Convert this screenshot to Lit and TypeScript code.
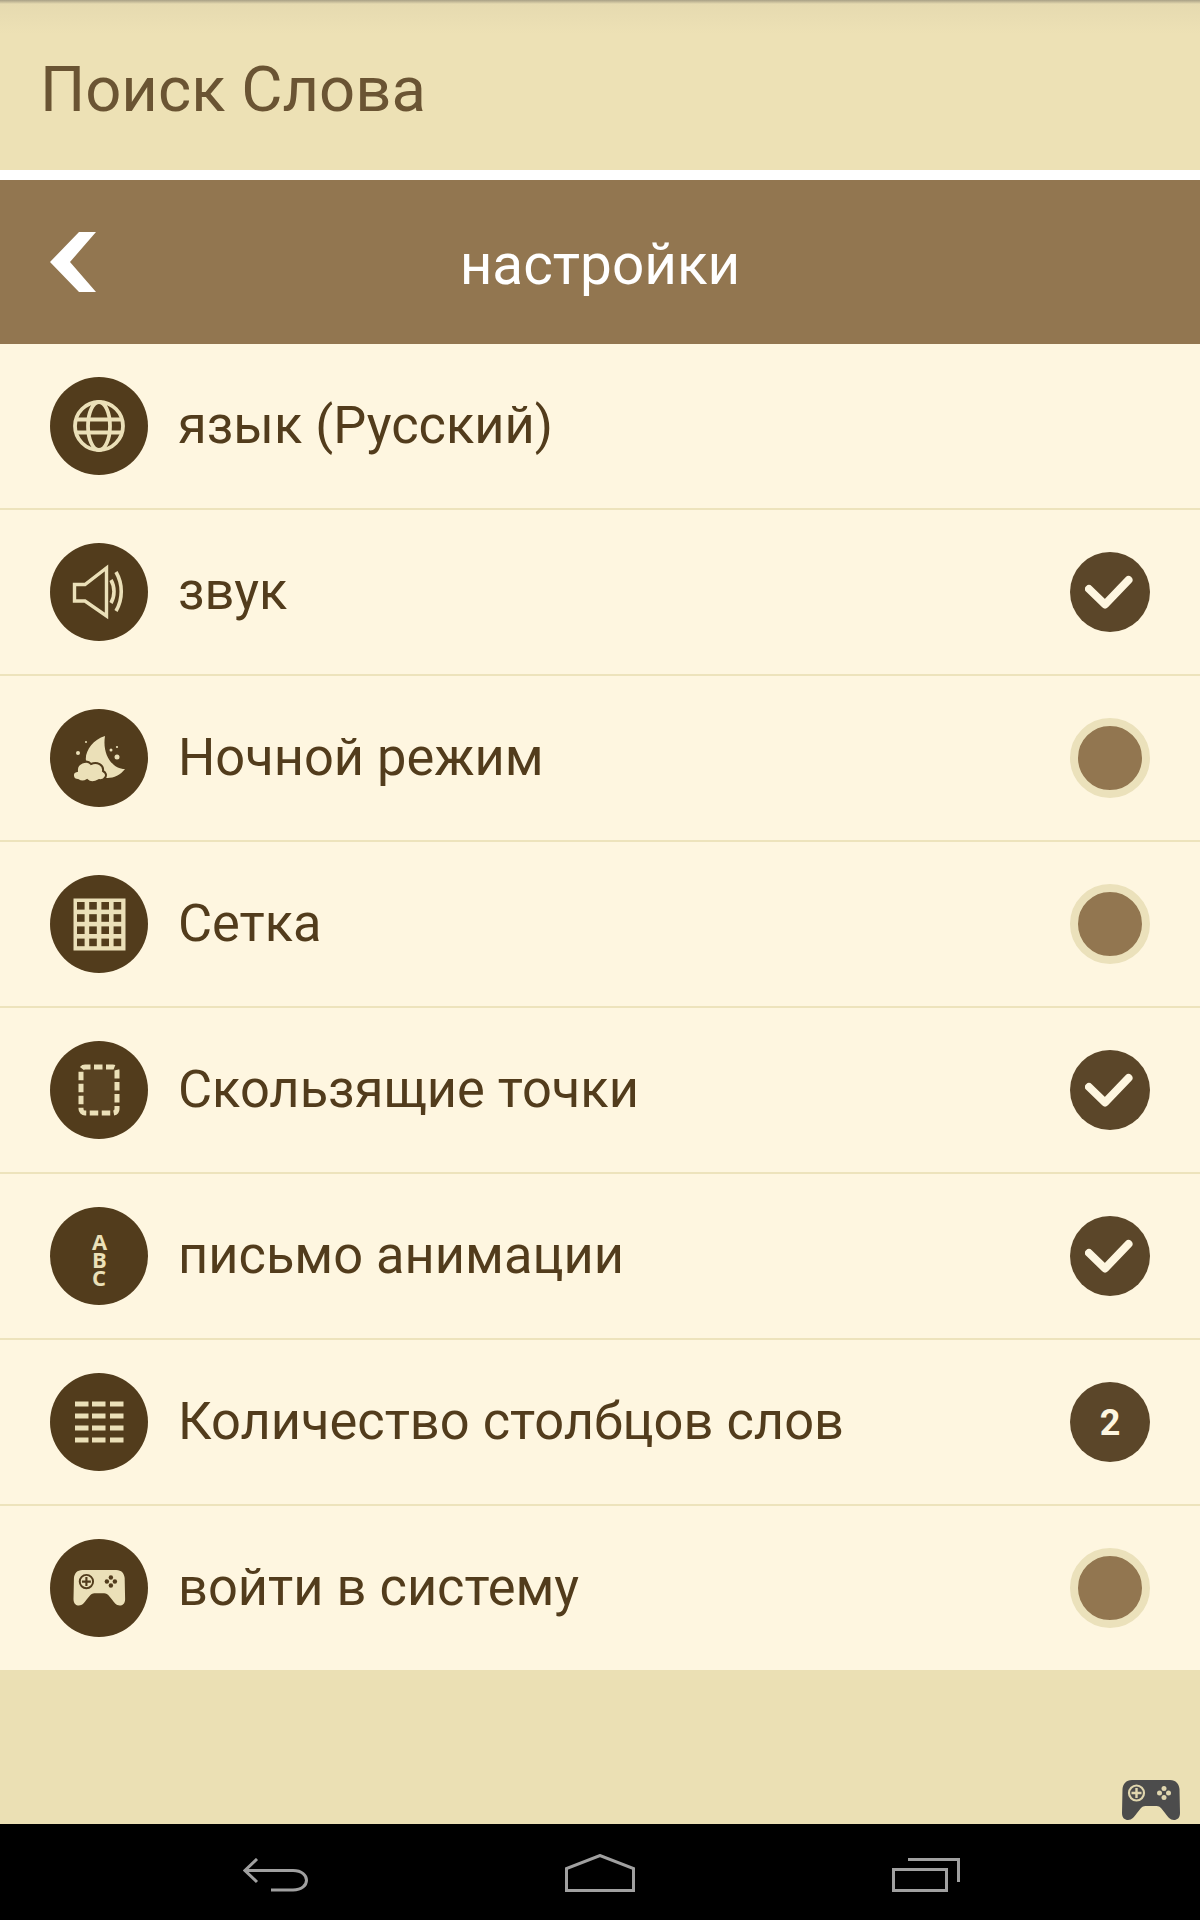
import { LitElement, html, css, svg } from "lit";
import { customElement } from "lit/decorators.js";

const CREAM = "#ebe0b8";
const DARK = "#523c1c";

const padPath =
  "M10 0H48C54 0 57 4 57.500 9L58 33C58 38 55 40 52 40C48 40 46 37 43 33L39 28C37 26 35 26 33 26H25C23 26 21 26 19 28L15 33C12 37 10 40 6 40C3 40 0 38 0 33L.5 9C1 4 4 0 10 0Z";

const pad = (body: string, detail: string) => svg`
  <path d=${padPath} fill=${body}></path>
  <circle cx="14.500" cy="13" r="7.500" fill="none" stroke=${detail} stroke-width="2.200"></circle>
  <path d="M14.500 8v10M9.500 13h10" stroke=${detail} stroke-width="2.400"></path>
  <circle cx="42" cy="8.500" r="2.500" fill=${detail}></circle>
  <circle cx="42" cy="17.500" r="2.500" fill=${detail}></circle>
  <circle cx="37.500" cy="13" r="2.500" fill=${detail}></circle>
  <circle cx="46.500" cy="13" r="2.500" fill=${detail}></circle>`;

const grid = () => {
  const cells = [];
  for (let r = 0; r < 4; r++)
    for (let c = 0; c < 4; c++)
      cells.push(svg`<rect x=${27 + c * 12.2} y=${27 + r * 12.2} width="7.600" height="7.600" fill=${DARK}></rect>`);
  return cells;
};

const bars = () => {
  const out = [];
  for (const y of [28.500, 40.500, 52.500, 64.500])
    for (const x of [25, 42, 60])
      out.push(svg`<rect x=${x} y=${y} width="13.500" height="5" fill=${CREAM}></rect>`);
  return out;
};

const icons: Record<string, unknown> = {
  globe: svg`<g fill="none" stroke=${CREAM} stroke-width="3.800">
    <circle cx="49" cy="49" r="24"></circle>
    <ellipse cx="49" cy="49" rx="11" ry="24"></ellipse>
    <path d="M25 42.500H73M25 55.500H73"></path></g>`,
  sound: svg`<g fill="none" stroke=${CREAM}>
    <path d="M24.500 41.500H35L56.500 25V73L35 58H24.500Z" stroke-width="3.400"></path>
    <path d="M61 37C65 44 65 53 61 60" stroke-width="3.600"></path>
    <path d="M66 29C73 41 73 56 66 68" stroke-width="3.600"></path></g>`,
  night: svg`<path d="M55 27C39 32 30 50 40 60C49 72 66 72 75 60C62 60 52 45 55 27Z" fill=${CREAM}></path>
    <path d="M28 71C22 71 21 63 27 62C26 54 37 50 41 55C47 52 54 56 53 62C59 65 55 72 49 71C44 74 40 74 37 71C34 73 31 73 28 71Z" fill=${CREAM} stroke=${DARK} stroke-width="2"></path>
    <circle cx="28" cy="44" r="2" fill=${CREAM}></circle>
    <circle cx="67" cy="48" r="2.500" fill=${CREAM}></circle>
    <circle cx="61" cy="41" r="1.500" fill=${CREAM}></circle>
    <circle cx="67" cy="38" r="1.100" fill=${CREAM}></circle>
    <circle cx="36" cy="33" r="1" fill=${CREAM}></circle>`,
  grid: svg`<rect x="23.500" y="23.500" width="52" height="52" fill=${CREAM}></rect>${grid()}`,
  dashed: svg`<rect x="31" y="26" width="36" height="46" rx="4" fill="#584222" stroke=${CREAM} stroke-width="5" stroke-dasharray="8.500 3.500" stroke-dashoffset="3"></rect>`,
  abc: svg`<text class="abc" x="49" y="19" fill=${CREAM}>ABC</text>`,
  columns: bars(),
  pad: svg`<g transform="translate(23.500 31) scale(.89)">${pad(CREAM, DARK)}</g>`,
};

const rows: { icon: string; label: string; end: "none" | "on" | "off" | "num" }[] = [
  { icon: "globe", label: "язык (Русский)", end: "none" },
  { icon: "sound", label: "звук", end: "on" },
  { icon: "night", label: "Ночной режим", end: "off" },
  { icon: "grid", label: "Сетка", end: "off" },
  { icon: "dashed", label: "Скользящие точки", end: "on" },
  { icon: "abc", label: "письмо анимации", end: "on" },
  { icon: "columns", label: "Количество столбцов слов", end: "num" },
  { icon: "pad", label: "войти в систему", end: "off" },
];

@customElement("app-root")
export class AppRoot extends LitElement {
  static styles = css`
    :host {
      display: block;
      font-family: Roboto, "Noto Sans", sans-serif;
    }
    .screen {
      display: flex;
      flex-direction: column;
      height: 1920px;
      background: #fff;
    }
    .top {
      flex: none;
      height: 170px;
      display: flex;
      align-items: center;
      padding: 7px 0 0 40px;
      box-sizing: border-box;
      background: linear-gradient(#a89f85 0, #e6dab0 4px, #ede1b5 34px);
      color: #6a5433;
      font-size: 63.400px;
    }
    .head {
      flex: none;
      height: 164px;
      margin-top: 10px;
      background: #927650;
      color: #fff;
      display: grid;
      grid-template-columns: 1fr auto 1fr;
      align-items: center;
      font-size: 56.700px;
    }
    .title {
      padding-top: 4px;
    }
    .back {
      display: block;
      margin-left: 50px;
      width: 46px;
      height: 60px;
    }
    .list {
      flex: none;
      background: #fef6e0;
    }
    .row {
      display: flex;
      align-items: center;
      height: 164px;
      border-bottom: 2px solid #ede3bc;
      padding: 0 50px;
      color: #523c1c;
      font-size: 52.400px;
    }
    .row:last-child {
      border-bottom: 0;
    }
    .ic {
      flex: none;
      width: 98px;
      height: 98px;
      margin-right: 30px;
      display: block;
    }
    .ic .abc {
      font: 700 22px "Open Sans", sans-serif;
      writing-mode: vertical-rl;
      text-orientation: upright;
      letter-spacing: -12px;
    }
    .label {
      flex: 1;
      padding-bottom: 2px;
    }
    .end {
      flex: none;
      width: 80px;
      height: 80px;
      box-sizing: border-box;
      border-radius: 50%;
      display: flex;
      align-items: center;
      justify-content: center;
    }
    .on,
    .num {
      background: #5b4629;
      color: #fef6e0;
    }
    .off {
      background: #927650;
      border: 8px solid #ebe1bb;
    }
    .num {
      font-size: 36px;
      font-weight: 700;
      padding-top: 2px;
    }
    .end svg {
      display: block;
      width: 50px;
      height: 40px;
    }
    .fill {
      flex: 1;
      position: relative;
      background: #ebe0b4;
    }
    .corner {
      position: absolute;
      right: 20px;
      bottom: 4px;
      width: 58px;
      height: 40px;
      display: block;
    }
    .nav {
      flex: none;
      height: 96px;
      background: #000;
      display: flex;
      align-items: flex-start;
    }
    .nav svg {
      display: block;
    }
    .nb {
      margin: 34px 0 0 243px;
      width: 66px;
      height: 34px;
    }
    .nh {
      margin: 30px 0 0 256px;
      width: 70px;
      height: 38px;
    }
    .nr {
      margin: 34px 0 0 257px;
      width: 68px;
      height: 34px;
    }
  `;

  private end(kind: string) {
    if (kind === "none") return null;
    if (kind === "on")
      return html`<div class="end on">
        <svg viewBox="0 0 50 40">
          <path d="M4 17L20 32.500L43.500 8" fill="none" stroke="#fef6e0" stroke-width="8" stroke-linecap="round" stroke-linejoin="round"></path>
        </svg>
      </div>`;
    if (kind === "off") return html`<div class="end off"></div>`;
    return html`<div class="end num">2</div>`;
  }

  render() {
    return html`<div class="screen">
      <div class="top">Поиск Слова</div>
      <div class="head">
        <svg class="back" viewBox="0 0 46 60">
          <polygon points="29,0 46,0 20,30 46,60 29,60 0,30" fill="#fff"></polygon>
        </svg>
        <div class="title">настройки</div>
        <div></div>
      </div>
      <div class="list">
        ${rows.map(
          (r) => html`<div class="row">
            <svg class="ic" viewBox="0 0 98 98">
              <circle cx="49" cy="49" r="49" fill=${DARK}></circle>
              ${icons[r.icon]}
            </svg>
            <div class="label">${r.label}</div>
            ${this.end(r.end)}
          </div>`
        )}
      </div>
      <div class="fill">
        <svg class="corner" viewBox="0 0 58 40">${pad("#4c4c4c", "#e0d6ae")}</svg>
      </div>
      <div class="nav">
        <svg class="nb" viewBox="0 0 66 34">
          <path d="M14 1L2 12.500L14 24M2 12.500H50C68 12.500 68 32 50 32H28" fill="none" stroke="#a0a0a0" stroke-width="3"></path>
        </svg>
        <svg class="nh" viewBox="0 0 70 38">
          <path d="M1.500 36.500V14.500L35 1.500L68.500 14.500V36.500Z" fill="none" stroke="#a0a0a0" stroke-width="3"></path>
        </svg>
        <svg class="nr" viewBox="0 0 68 34">
          <path d="M1.500 11.500H54.500V32.500H1.500Z" fill="none" stroke="#a0a0a0" stroke-width="3"></path>
          <path d="M16 1.500H66.500V24" fill="none" stroke="#a0a0a0" stroke-width="3"></path>
        </svg>
      </div>
    </div>`;
  }
}
